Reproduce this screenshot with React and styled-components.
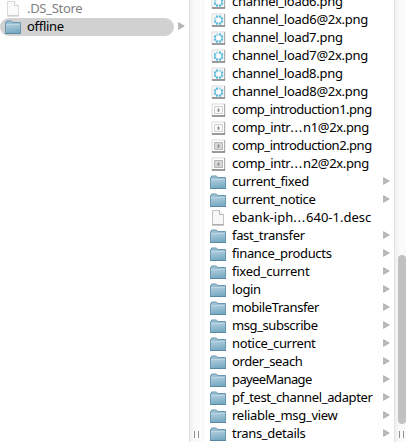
import React from "react";
import styled, { createGlobalStyle } from "styled-components";

const GlobalStyle = createGlobalStyle`
  body { margin: 0; background: #fff; overflow: hidden; }
`;

const Browser = styled.div`
  display: grid;
  grid-template-columns: 189px 15px 190px 12px;
  width: 406px;
  height: 442px;
  overflow: hidden;
  background: #fff;
  font-family: "Noto Sans", "Open Sans", sans-serif;
  font-size: 13px;
`;

const Column = styled.div`
  min-width: 0;
  height: 442px;
  overflow: hidden;
`;

const List = styled.div`
  margin-top: ${(p) => p.$scroll || 0}px;
`;

const Row = styled.div`
  display: flex;
  align-items: flex-start;
  justify-content: space-between;
  height: 18px;
  padding-right: 4px;
`;

const Entry = styled.div`
  display: flex;
  align-items: flex-start;
  gap: 5px;
  box-sizing: border-box;
  width: 174px;
  height: 18px;
  padding-left: ${(p) => p.$inset}px;
  border-radius: 9px;
  background: ${(p) => (p.$selected ? "#d1d1d1" : "transparent")};
`;

const IconBox = styled.div`
  width: 17px;
  height: 18px;
  flex: none;
  svg { display: block; }
`;

const Label = styled.span`
  line-height: 16px;
  white-space: pre;
  color: ${(p) => (p.$dim ? "#7f7f7f" : "#000")};
  letter-spacing: ${(p) => p.$tracking}px;
`;

const Dots = styled.span`
  letter-spacing: 0.8px;
`;

const Arrow = styled.svg`
  flex: none;
  display: block;
  margin-top: 4px;
`;

const Gutter = styled.div`
  display: flex;
  flex-direction: column;
  justify-content: flex-end;
  align-items: flex-start;
  box-sizing: border-box;
  height: 442px;
  padding: 0 0 4px ${(p) => (p.$end ? 3 : 4)}px;
  border-left: 1px solid #e2e2e2;
  background: ${(p) =>
    p.$end
      ? "linear-gradient(90deg, #efefef, #fafafa 5px, #fafafa)"
      : "linear-gradient(90deg, #f1f1f1, #fafafa 5px, #fafafa 10px, #fff 11px, #f4f4f4 14px)"};
`;

const Thumb = styled.div`
  width: 8px;
  height: 169px;
  margin-bottom: 7px;
  border-radius: 4px;
  background: #c1c1c1;
`;

const Grip = styled.div`
  box-sizing: border-box;
  width: 5px;
  height: 7px;
  margin-left: ${(p) => p.$shift || 0}px;
  border: solid #909090;
  border-width: 0 1px;
`;

const Folder = () => (
  <svg width="17" height="18" viewBox="0 0 17 18">
    <defs>
      <linearGradient id="folder" x1="0" y1="0" x2="0.25" y2="1">
        <stop offset="0" stopColor="#b4d1df" />
        <stop offset="1" stopColor="#7aabc5" />
      </linearGradient>
    </defs>
    <path d="M.5 15.5V4.5H1.5V3H6.5L7.5 4.5H15.5V15.5Z" fill="#98bfd2" stroke="#6c99b1" />
    <path d="M1 6H15V15H1Z" fill="url(#folder)" />
    <path d="M1 6.5H15" stroke="#bcd7e3" />
    <path d="M0 15.5H16" stroke="#5a87a1" />
  </svg>
);

const Doc = ({ dim }) => (
  <svg width="17" height="18" viewBox="0 0 17 18" opacity={dim ? 0.6 : 1}>
    <path d="M2.5 1.5H9.5L13.5 5.5V15.5H2.5Z" fill="#f7f7f7" stroke="#c2c2c2" />
    <path d="M9.5 1.5V5.5H13.5" fill="#fff" stroke="#b5b5b5" />
    <path d="M2 16H14" stroke="#999" />
  </svg>
);

const Frame = ({ children }) => (
  <>
    <path d="M2 3H15V15H2Z" fill="#fff" stroke="#d2d2d2" strokeWidth=".8" />
    <path d="M14.5 3V15" stroke="#b0b0b0" />
    <path d="M2 15H15" stroke="#777" strokeWidth="1.4" />
    {children}
  </>
);

const gaps = { 6: 7, 7: 0, 8: 1 };

const segments = [
  [6, 4.5],
  [9, 4.5],
  [11, 6.5],
  [11, 9.5],
  [9, 11.5],
  [6, 11.5],
  [4, 9.5],
  [4, 6.5],
];

const Loader = ({ step }) => (
  <svg width="17" height="18" viewBox="0 0 17 18">
    <Frame>
      <path d="M3.5 4.5H13.5V13.5H3.5Z" fill="#e9eef0" />
      {segments.map(([x, y], i) => (
        <rect key={i} x={x} y={y} width="2.1" height="2.1" fill={i === gaps[step] ? "#a9dcec" : "#55b9dc"} />
      ))}
      <circle cx="8.5" cy="9" r="2.3" fill="#fff" />
    </Frame>
  </svg>
);

const Intro = ({ shade }) => (
  <svg width="17" height="18" viewBox="0 0 17 18">
    <Frame>
      <path d="M4.5 5.5H12.5V12.5H4.5Z" fill={shade ? "#d8d8d8" : "#fafafa"} stroke={shade ? "#b5b5b5" : "#cfcfcf"} />
      <path d="M8.5 7L9.5 8.6V10.8H7.5V8.6Z" fill="#919191" />
    </Frame>
  </svg>
);

const Disclosure = () => (
  <Arrow width="7" height="8" viewBox="0 0 7 8">
    <path d="M.5 .6L6.3 4L.5 7.4Z" fill="#b9b9b9" stroke="#a2a2a2" strokeWidth=".6" />
  </Arrow>
);

const icons = {
  folder: <Folder />,
  doc: <Doc />,
  hidden: <Doc dim />,
  load6: <Loader step={6} />,
  load7: <Loader step={7} />,
  load8: <Loader step={8} />,
  intro: <Intro />,
  introShade: <Intro shade />,
};

const leftItems = [
  [".DS_Store", "hidden", -0.3],
  ["offline", "folder", -0.3],
];

const rightItems = [
  ["channel_load6.png", "load6", -0.29],
  ["channel_load6@2x.png", "load6", -0.28],
  ["channel_load7.png", "load7", -0.29],
  ["channel_load7@2x.png", "load7", -0.28],
  ["channel_load8.png", "load8", -0.29],
  ["channel_load8@2x.png", "load8", -0.28],
  ["comp_introduction1.png", "intro", -0.48],
  ["comp_intr...n1@2x.png", "intro", -0.36],
  ["comp_introduction2.png", "introShade", -0.48],
  ["comp_intr...n2@2x.png", "introShade", -0.36],
  ["current_fixed", "folder", -0.26],
  ["current_notice", "folder", -0.33],
  ["ebank-iph...640-1.desc", "doc", 0],
  ["fast_transfer", "folder", -0.33],
  ["finance_products", "folder", -0.32],
  ["fixed_current", "folder", -0.23],
  ["login", "folder", -0.4],
  ["mobileTransfer", "folder", -0.39],
  ["msg_subscribe", "folder", -0.41],
  ["notice_current", "folder", -0.33],
  ["order_seach", "folder", -0.37],
  ["payeeManage", "folder", -0.6],
  ["pf_test_channel_adapter", "folder", -0.37],
  ["reliable_msg_view", "folder", -0.28],
  ["trans_details", "folder", -0.3],
];

const FileRow = ({ item: [name, kind, tracking], selected, inset }) => {
  const [head, tail] = name.split("...");
  return (
    <Row>
      <Entry $selected={selected} $inset={inset}>
        <IconBox>{icons[kind]}</IconBox>
        <Label $tracking={tracking} $dim={kind === "hidden"}>
          {head}
          {tail && <Dots>...</Dots>}
          {tail}
        </Label>
      </Entry>
      {kind === "folder" && <Disclosure />}
    </Row>
  );
};

export default function App() {
  return (
    <>
      <GlobalStyle />
      <Browser>
        <Column>
          <List>
            {leftItems.map((item) => (
              <FileRow key={item[0]} item={item} selected={item[0] === "offline"} inset={5} />
            ))}
          </List>
        </Column>
        <Gutter>
          <Grip />
        </Gutter>
        <Column>
          <List $scroll={-7}>
            {rightItems.map((item) => (
              <FileRow key={item[0]} item={item} inset={6} />
            ))}
          </List>
        </Column>
        <Gutter $end>
          <Thumb />
          <Grip $shift={1} />
        </Gutter>
      </Browser>
    </>
  );
}
